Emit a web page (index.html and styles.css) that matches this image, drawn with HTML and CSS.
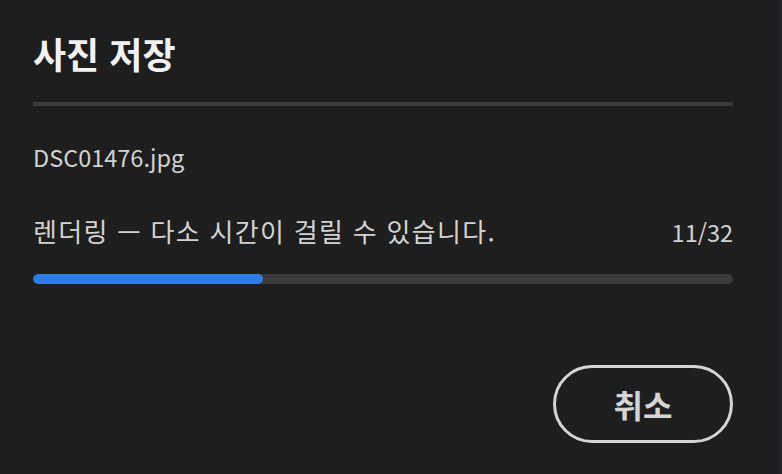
FILE: index.html
```html
<!DOCTYPE html>
<html lang="ko">
<head>
  <meta charset="UTF-8">
  <meta name="viewport" content="width=device-width, initial-scale=1">
  <title>사진 저장</title>
  <link rel="stylesheet" href="styles.css">
</head>
<body>

  <!-- 저장 진행 대화상자 -->
  <div class="dialog">
    <h1 class="dialog-title">사진 저장</h1>
    <div class="divider"></div>

    <p class="file-name">DSC01476.jpg</p>

    <div class="status-row">
      <span class="status-text">렌더링 — 다소 시간이 걸릴 수 있습니다.</span>
      <span class="status-count">11/32</span>
    </div>

    <div class="progress">
      <div class="progress-fill" style="width: 230px"></div>
    </div>

    <div class="actions">
      <button class="cancel-button">취소</button>
    </div>
  </div>

</body>
</html>
```

FILE: styles.css
```css
/* 기본 설정 */
body {
  margin: 0;
  background-color: #1e1e1e;
  font-family: "Noto Sans CJK KR", "Noto Sans", sans-serif;
  color: #d2d2d2;
  height: 100vh;
  overflow: hidden;
  border-right: 3px solid #222326;
  box-sizing: border-box;
}

/* 대화상자 */
.dialog {
  width: 700px;
  padding: 29px 0 0 33px;
  display: flex;
  flex-direction: column;
}

.dialog-title {
  margin: 0;
  font-size: 36px;
  font-weight: 700;
  line-height: 48px;
  color: #f2f2f2;
}

.divider {
  height: 4px;
  background-color: #3a3a3a;
  margin-top: 25px;
}

.file-name {
  margin: 34px 0 0;
  font-size: 23.5px;
  line-height: 34px;
}

/* 진행 상태 */
.status-row {
  display: flex;
  justify-content: space-between;
  align-items: baseline;
  margin-top: 40px;
  line-height: 34px;
}

.status-text {
  font-size: 26px;
  letter-spacing: 1.3px;
}

.status-count {
  font-size: 23.5px;
}

.progress {
  height: 10px;
  border-radius: 5px;
  background-color: #3a3a3a;
  margin-top: 25px;
  overflow: hidden;
}

.progress-fill {
  height: 100%;
  border-radius: 5px;
  background-color: #2d7de8;
}

/* 버튼 */
.actions {
  display: flex;
  justify-content: flex-end;
  margin-top: 81px;
}

.cancel-button {
  width: 180px;
  height: 78px;
  border: 3px solid #d4d4d4;
  border-radius: 39px;
  background-color: transparent;
  color: #d4d4d4;
  font-family: inherit;
  font-size: 32px;
  font-weight: 700;
  cursor: pointer;
}
```
